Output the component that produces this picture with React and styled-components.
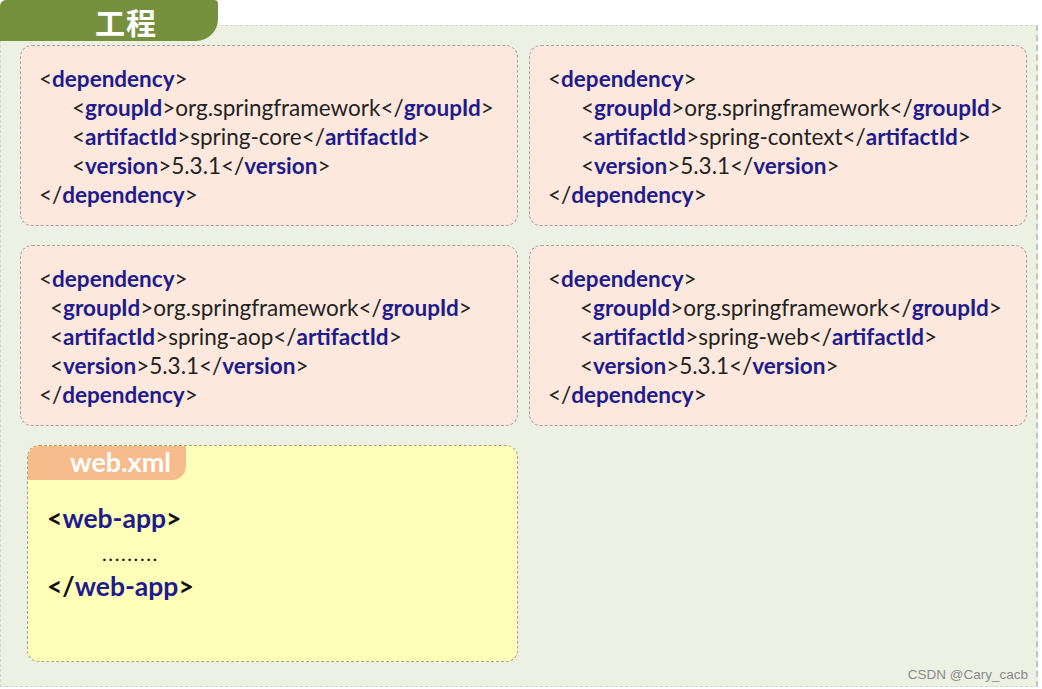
import React from 'react'
import styled, { createGlobalStyle } from 'styled-components'

const GlobalStyle = createGlobalStyle`
  html, body {
    margin: 0;
    padding: 0;
    background: #ffffff;
  }
  body {
    font-family: Lato, "Open Sans", sans-serif;
  }
`;

const deps = [
  { artifact: 'spring-core', indent: 33 },
  { artifact: 'spring-context', indent: 33 },
  { artifact: 'spring-aop', indent: 11 },
  { artifact: 'spring-web', indent: 32 },
];

const Tag = ({ name, close }) => (
  <>
    {close ? '</' : '<'}
    <TagName>{name}</TagName>
    {'>'}
  </>
);

const App = () => {
  return (
    <>
      <GlobalStyle />
      <Page>
        <Panel>
          <Title>工程</Title>
          <Grid>
            {deps.map((d) => (
              <DepCard key={d.artifact}>
                <Line>
                  <Tag name="dependency" />
                </Line>
                <Line indent={d.indent}>
                  <Tag name="groupId" />org.springframework<Tag name="groupId" close />
                </Line>
                <Line indent={d.indent}>
                  <Tag name="artifactId" />{d.artifact}<Tag name="artifactId" close />
                </Line>
                <Line indent={d.indent}>
                  <Tag name="version" />5.3.1<Tag name="version" close />
                </Line>
                <Line>
                  <Tag name="dependency" close />
                </Line>
              </DepCard>
            ))}
            <WebCard>
              <FileTab>web.xml</FileTab>
              <WebBody>
                <WebLine>
                  <Tag name="web-app" />
                </WebLine>
                <Dots>.........</Dots>
                <WebLine>
                  <Tag name="web-app" close />
                </WebLine>
              </WebBody>
            </WebCard>
          </Grid>
          <Watermark>CSDN @Cary_cacb</Watermark>
        </Panel>
      </Page>
    </>
  );
}

const Page = styled.div`
  width: 1042px;
  height: 689px;
  padding-top: 25px;
  box-sizing: border-box;
  overflow: hidden;
`;

const Panel = styled.section`
  position: relative;
  width: 1038px;
  height: 662px;
  box-sizing: border-box;
  background: #edf1e3;
  border: 1px dashed #d3d7c4;
  border-right: 2px dashed #c4c8b2;
  padding: 19px 10px 0 19px;
`;

const Title = styled.div`
  position: absolute;
  top: -26px;
  left: -1px;
  width: 218px;
  height: 41px;
  box-sizing: border-box;
  display: flex;
  align-items: center;
  background: #76913d;
  border-radius: 6px 4px 22px 0;
  color: #ffffff;
  font-family: "Noto Sans CJK SC", sans-serif;
  font-weight: 700;
  font-size: 30px;
  line-height: 1;
  padding: 1px 0 0 95px;
  letter-spacing: 1px;
`;

const Grid = styled.div`
  display: grid;
  grid-template-columns: 498px 498px;
  grid-template-rows: 181px 181px 217px;
  column-gap: 11px;
  row-gap: 19px;
`;

const DepCard = styled.div`
  background: #fde8de;
  border: 1px dashed #a3a3a3;
  border-radius: 12px;
  box-sizing: border-box;
  padding: 18px 0 0 18px;
  font-size: 22.5px;
  color: #222222;
`;

const Line = styled.div`
  height: 29px;
  line-height: 29px;
  white-space: nowrap;
  padding-left: ${(p) => p.indent || 0}px;
`;

const TagName = styled.span`
  font-weight: 700;
  color: #1e1b8c;
`;

const WebCard = styled.div`
  margin-left: 7px;
  background: #ffffb9;
  border: 1px dashed #a2a28c;
  border-radius: 12px;
  box-sizing: border-box;
  overflow: hidden;
`;

const FileTab = styled.div`
  width: 158px;
  height: 34px;
  box-sizing: border-box;
  background: #f8bb8c;
  border-bottom-right-radius: 14px;
  color: #ffffff;
  font-weight: 700;
  font-size: 27px;
  line-height: 31px;
  padding-left: 42px;
`;

const WebBody = styled.div`
  padding: 21px 0 0 19px;
  color: #111111;
`;

const WebLine = styled.div`
  font-size: 26.5px;
  font-weight: 700;
  height: 34px;
  line-height: 34px;
`;

const Dots = styled.div`
  font-size: 20px;
  height: 34px;
  line-height: 36px;
  padding-left: 55px;
  letter-spacing: 1.6px;
`;

const Watermark = styled.div`
  position: absolute;
  right: 8px;
  bottom: 4px;
  font-family: "Liberation Sans", Arial, sans-serif;
  font-size: 13.5px;
  color: #8a8a8a;
`;

export default App
